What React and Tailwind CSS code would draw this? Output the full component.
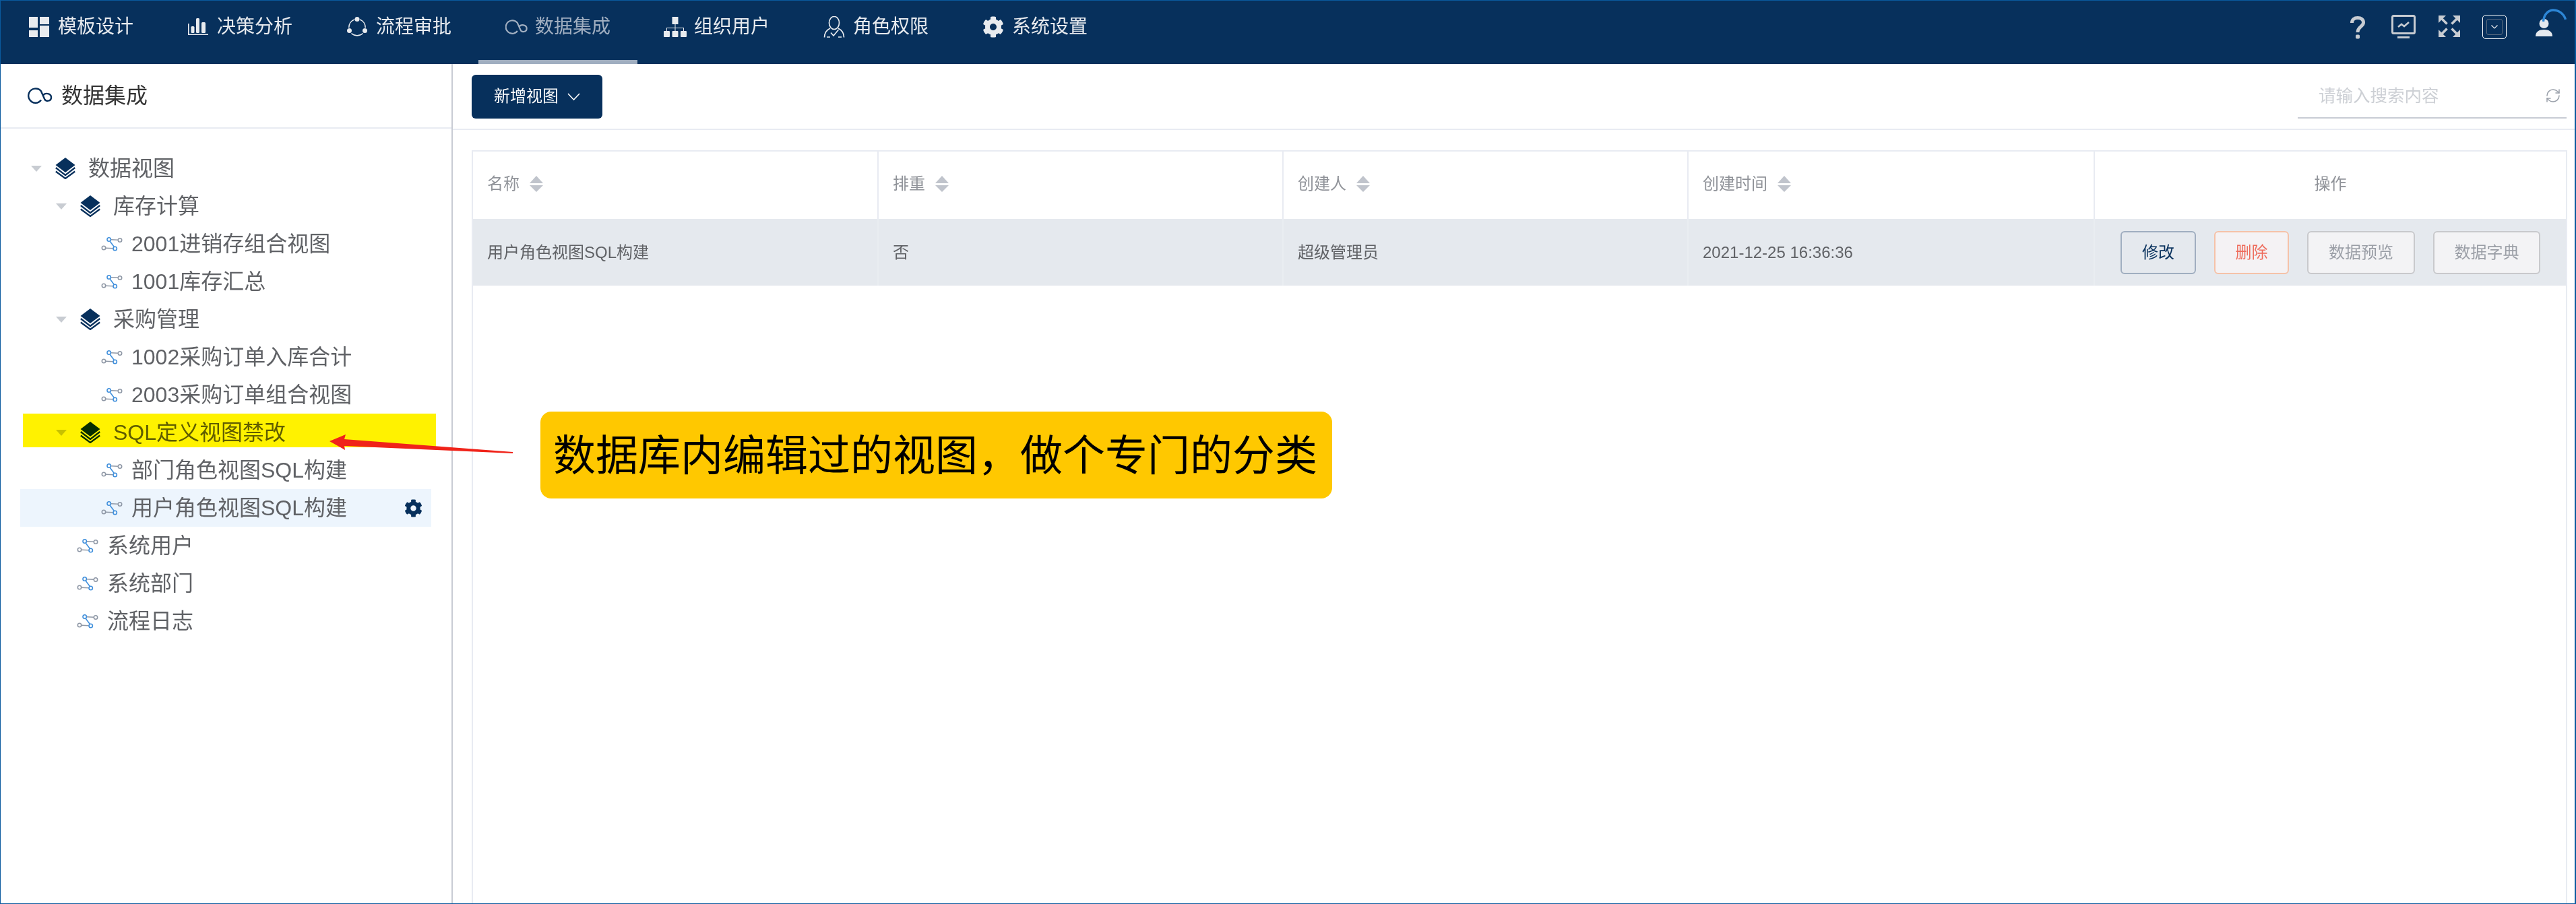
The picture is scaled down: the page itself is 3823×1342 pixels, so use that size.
import React from "react";
import { FaCog } from "react-icons/fa";
import { RefreshCw } from "lucide-react";

const NAVY = "#07305c";

function TemplateIcon() {
  return (
    <svg viewBox="0 0 30 30" className="h-[30px] w-[30px] shrink-0" fill="#e8ebef">
      <rect x="0" y="0" width="13" height="16" />
      <rect x="0" y="20" width="13" height="10" />
      <rect x="16" y="0" width="14" height="11" />
      <rect x="16" y="13" width="14" height="17" />
    </svg>
  );
}
function ChartIcon() {
  return (
    <svg viewBox="0 0 30 26" className="h-[26px] w-[30px] shrink-0" fill="#e8ebef">
      <path d="M0 8h1.6v15.6H30V25H0z" />
      <rect x="4.5" y="12" width="5" height="10" rx="1.5" />
      <rect x="12" y="0" width="5" height="22" rx="1.5" />
      <rect x="20" y="6" width="6" height="16" rx="1.5" />
    </svg>
  );
}
function FlowIcon() {
  return (
    <svg viewBox="0 0 30 30" className="h-[30px] w-[30px] shrink-0" fill="#e8ebef" stroke="none">
      <path d="M11 4A12.5 12.5 0 0 0 2.8 16M19 4A12.5 12.5 0 0 1 27.2 16M6.5 24.5A12.5 12.5 0 0 0 23.5 24.5" fill="none" stroke="#e8ebef" strokeWidth="1.6" />
      <circle cx="15" cy="3.5" r="3.5" />
      <circle cx="3.5" cy="20.5" r="3.5" />
      <circle cx="26.5" cy="20.5" r="3.5" />
    </svg>
  );
}
function CloudIcon({ className, color }) {
  return (
    <svg viewBox="0 0 36 24" className={className} fill="none" stroke={color} strokeWidth="2.4">
      <path d="M19.5 18.5C17.4 21.4 14.6 22.7 11.6 22.7A10.6 10.6 0 1 1 19.4 5.2L24.5 16.8C26 21 34.5 21 34.5 14.5C34.5 8 25 7.5 22.6 11.5" />
    </svg>
  );
}
function OrgIcon() {
  return (
    <svg viewBox="0 0 34 30" className="h-[30px] w-[34px] shrink-0" fill="#e8ebef">
      <rect x="12.5" y="0" width="9" height="11" />
      <path d="M16.5 11h1v5H30v5h-1v-4H17.5v4h-1v-4H5v4H4v-5h12.5z" />
      <rect x="0" y="21" width="9" height="9" rx="1" />
      <rect x="12.5" y="21" width="9" height="9" rx="1" />
      <rect x="25" y="21" width="9" height="9" rx="1" />
    </svg>
  );
}
function RoleIcon() {
  return (
    <svg viewBox="0 0 32 32" className="h-[32px] w-[32px] shrink-0" fill="none" stroke="#e8ebef" strokeWidth="1.7">
      <ellipse cx="16" cy="10" rx="7.5" ry="9.5" />
      <path d="M10 18C6 20 1.5 23 1.5 31.5M22 18C26 20 30.5 23 30.5 31.5" />
      <path d="M11 24.5l4 4.5 7.5-9" />
      <path d="M5 31h5M22 31h5" />
    </svg>
  );
}
function QuestionIcon() {
  return (
    <svg viewBox="0 0 22 34" className="h-[34px] w-[22px]" fill="none" stroke="#c8ccd2" strokeWidth="5">
      <path d="M2.5 10C2.5 5 6 2.5 11 2.5C16 2.5 19.5 5 19.5 9.5C19.5 15.5 11 15.5 11 24" />
      <rect x="8.5" y="28" width="5" height="5" rx="1" fill="#c8ccd2" strokeWidth="1" />
    </svg>
  );
}
function MonitorIcon() {
  return (
    <svg viewBox="0 0 36 35" className="h-[35px] w-[36px]" fill="none" stroke="#c8ccd2">
      <rect x="1.5" y="1.5" width="33" height="26" rx="2" strokeWidth="3" />
      <path d="M10 18l5-4 4 3 7-6" strokeWidth="2.6" />
      <path d="M9 33.5h18" strokeWidth="3" />
    </svg>
  );
}
function ExpandIcon() {
  return (
    <svg viewBox="0 0 32 32" className="h-[32px] w-[32px]" fill="#c8ccd2" stroke="#c8ccd2">
      <path d="M0 0h11L0 11z" strokeWidth="0" />
      <path d="M32 0H21L32 11z" strokeWidth="0" />
      <path d="M0 32h11L0 21z" strokeWidth="0" />
      <path d="M32 32H21L32 21z" strokeWidth="0" />
      <path d="M4 4L12.5 12.5M28 4L19.5 12.5M4 28L12.5 19.5M28 28L19.5 19.5" strokeWidth="3.6" fill="none" />
    </svg>
  );
}
function UserIcon() {
  return (
    <svg viewBox="0 0 46 42" className="h-[42px] w-[46px]">
      <circle cx="12.5" cy="22" r="7" fill="#e5e9ee" />
      <path d="M0 41C0 34 5 31 12.5 31S25 34 25 41z" fill="#e5e9ee" />
      <path d="M11.5 19C12.5 7 20 2 26 2C34 2 42 7 44.5 16" fill="none" stroke="#2d86d6" strokeWidth="3.4" />
    </svg>
  );
}
function LayersIcon() {
  return (
    <svg viewBox="0 0 30 32" className="h-[32px] w-[30px] shrink-0">
      <polygon points="15,0 29.5,11 15,22 0.5,11" fill={NAVY} />
      <polyline points="0.8,15 15,26 29.2,15" fill="none" stroke={NAVY} strokeWidth="2.3" />
      <polyline points="0.8,20.5 15,31 29.2,20.5" fill="none" stroke={NAVY} strokeWidth="2.3" />
    </svg>
  );
}
function LeafIcon() {
  return (
    <svg viewBox="0 0 32 21" className="h-[21px] w-[32px] shrink-0" fill="none" strokeWidth="1.6">
      <path d="M15 3.7L25 4.3M7 16.2L17.7 16.8" stroke="#8f98a6" />
      <path d="M13.2 6.2L19.2 14.3" stroke="#3f8fdc" />
      <circle cx="11.7" cy="3.5" r="2.7" stroke="#3f8fdc" />
      <circle cx="28" cy="4.5" r="2.7" stroke="#8f98a6" />
      <circle cx="4" cy="16" r="2.7" stroke="#8f98a6" />
      <circle cx="20.7" cy="17" r="2.7" stroke="#3f8fdc" />
    </svg>
  );
}
function Caret() {
  return (
    <svg viewBox="0 0 16 9" className="h-[9px] w-[16px] shrink-0">
      <polygon points="0,0 16,0 8,9" fill="#c8ccd2" />
    </svg>
  );
}
function SortIcon() {
  return (
    <svg viewBox="0 0 20 24" className="ml-[15px] h-[24px] w-[20px] shrink-0" fill="#c0c4cc">
      <polygon points="10,0 20,11 0,11" />
      <polygon points="0,14 20,14 10,24" />
    </svg>
  );
}

const navItems = [
  ["模板设计", <TemplateIcon />],
  ["决策分析", <ChartIcon />],
  ["流程审批", <FlowIcon />],
  ["数据集成", <CloudIcon className="h-[22px] w-[33px] shrink-0" color="#a0aec0" />, true],
  ["组织用户", <OrgIcon />],
  ["角色权限", <RoleIcon />],
  ["系统设置", <FaCog className="h-[32px] w-[32px] shrink-0 text-[#e8ebef]" />],
];

const tree = [
  { label: "数据视图", kind: "group", pad: "pl-[16px]" },
  { label: "库存计算", kind: "group", pad: "pl-[53px]" },
  { label: "2001进销存组合视图", pad: "pl-[120px]" },
  { label: "1001库存汇总", pad: "pl-[120px]" },
  { label: "采购管理", kind: "group", pad: "pl-[53px]" },
  { label: "1002采购订单入库合计", pad: "pl-[120px]" },
  { label: "2003采购订单组合视图", pad: "pl-[120px]" },
  { label: "SQL定义视图禁改", kind: "group", pad: "pl-[53px]" },
  { label: "部门角色视图SQL构建", pad: "pl-[120px]" },
  { label: "用户角色视图SQL构建", pad: "pl-[120px]", active: true },
  { label: "系统用户", pad: "pl-[84px]" },
  { label: "系统部门", pad: "pl-[84px]" },
  { label: "流程日志", pad: "pl-[84px]" },
];

function TreeRow({ item }) {
  return (
    <div className={`flex h-[56px] items-center ${item.pad} ${item.active ? "bg-[#edf5fd]" : ""}`}>
      {item.kind === "group" ? (
        <>
          <Caret />
          <span className="ml-[20px]"><LayersIcon /></span>
          <span className="ml-[19px]">{item.label}</span>
        </>
      ) : (
        <>
          <LeafIcon />
          <span className="ml-[13px]">{item.label}</span>
        </>
      )}
      {item.active && <FaCog className="ml-auto mr-[13px] h-[27px] w-[27px] text-[#07305c]" />}
    </div>
  );
}

const headers = ["名称", "排重", "创建人", "创建时间"];
const cells = ["用户角色视图SQL构建", "否", "超级管理员", "2021-12-25 16:36:36"];

export default function App() {
  return (
    <div className="relative flex h-[1342px] w-[3823px] flex-col overflow-hidden border-t border-b border-l border-r-2 border-[#0a5a9e] bg-white [font-family:'Liberation_Sans','Noto_Sans_CJK_SC',sans-serif]">
      <header className="flex h-[94px] shrink-0 bg-[#07305c] pl-px">
        {navItems.map(([label, icon, active]) => (
          <div
            key={label}
            className={`flex h-[94px] w-[236px] items-center gap-[12px] border-b-[6px] px-10 pb-[10px] text-[28px] ${
              active ? "border-[#a0aec0] text-[#a0aec0]" : "border-transparent text-[#e8ebef]"
            }`}
          >
            <span className="flex w-[32px] shrink-0 justify-center">{icon}</span>
            <span className="whitespace-nowrap">{label}</span>
          </div>
        ))}
        <div className="ml-auto flex items-start pr-[12px] pt-[12px]">
          <span className="mt-[11px]"><QuestionIcon /></span>
          <span className="ml-[39px] mt-[9px]"><MonitorIcon /></span>
          <span className="ml-[34px] mt-[10px]"><ExpandIcon /></span>
          <div className="ml-[33px] mt-[9px] flex h-[36px] w-[36px] items-center justify-center rounded-[5px] border border-white">
            <div className="flex h-[24px] w-[24px] items-center justify-center rounded-[3px] border border-[#5b6b80]">
              <svg viewBox="0 0 10 6" className="h-[6px] w-[10px]" fill="none" stroke="#e8ebef" strokeWidth="1.2">
                <path d="M0.5 0.5L5 5L9.5 0.5" />
              </svg>
            </div>
          </div>
          <span className="ml-[43px]"><UserIcon /></span>
        </div>
      </header>

      <div className="flex min-h-0 flex-1">
        <aside className="w-[671px] shrink-0 border-r-2 border-[#c8ccd4]">
          <div className="flex h-[96px] items-center gap-[13px] border-b-2 border-[#e8ebf2] pl-[40px] text-[32px] text-[#333333]">
            <CloudIcon className="h-[24px] w-[37px]" color="#07305c" />
            <span>数据集成</span>
          </div>
          <div className="pl-[29px] pr-[30px] pt-[31px] text-[32px] text-[#606266]">
            {tree.map((item) => (
              <TreeRow key={item.label} item={item} />
            ))}
          </div>
        </aside>

        <main className="flex min-w-0 flex-1 flex-col">
          <div className="flex h-[98px] shrink-0 items-center justify-between border-b-2 border-[#e8ebf2] pl-[28px] pr-[12px]">
            <button className="flex h-[65px] w-[194px] items-center justify-center gap-[13px] rounded-[6px] bg-[#07305c] text-[24px] text-white">
              新增视图
              <svg viewBox="0 0 19 11" className="h-[11px] w-[19px]" fill="none" stroke="#ffffff" strokeWidth="1.6">
                <path d="M1 1L9.5 10L18 1" />
              </svg>
            </button>
            <div className="flex h-[66px] w-[399px] items-center border-b-2 border-[#c8ccd4] pl-[31px] pr-[8px]">
              <input
                placeholder="请输入搜索内容"
                className="min-w-0 flex-1 bg-transparent text-[25.5px] outline-none placeholder:text-[#cdd0d5]"
              />
              <RefreshCw className="h-[24px] w-[24px] text-[#9aa0aa]" strokeWidth={1.5} />
            </div>
          </div>

          <div className="ml-[28px] mr-[11px] mt-[30px] flex-1 border-2 border-b-0 border-[#e8ebf2]">
            <div className="grid h-[100px] grid-cols-[602px_601px_601px_603px_1fr] text-[24px] text-[#909399]">
              {headers.map((h) => (
                <div key={h} className="flex items-center border-r-2 border-[#e8ebf2] pb-[4px] pl-[21px]">
                  {h}
                  <SortIcon />
                </div>
              ))}
              <div className="flex items-center justify-center pb-[4px]">操作</div>
            </div>
            <div className="grid h-[99px] grid-cols-[602px_601px_601px_603px_1fr] bg-[#e5e9ee] text-[24px] text-[#606266]">
              {cells.map((c) => (
                <div key={c} className="flex items-center border-r-2 border-[#e9edf1] pl-[21px]">
                  {c}
                </div>
              ))}
              <div className="flex items-center justify-center gap-[27px]">
                <button className="h-[64px] w-[112px] rounded-[6px] border-2 border-[#a0aec0] text-[24px] text-[#07305c]">修改</button>
                <button className="h-[64px] w-[111px] rounded-[6px] border-2 border-[#f5c2a8] bg-[#f4f2f4] text-[24px] text-[#ee6c5c]">删除</button>
                <button className="h-[64px] w-[160px] rounded-[6px] border-2 border-[#c8c9cc] bg-[#f3f3f5] text-[24px] text-[#9a9ea6]">数据预览</button>
                <button className="h-[64px] w-[159px] rounded-[6px] border-2 border-[#c8c9cc] bg-[#f3f3f5] text-[24px] text-[#9a9ea6]">数据字典</button>
              </div>
            </div>
          </div>
        </main>
      </div>

      {/* annotations drawn over the screenshot */}
      <div className="absolute left-[33px] top-[613px] h-[50px] w-[613px] bg-[#fff200] mix-blend-multiply" />
      <svg viewBox="0 0 274 30" className="absolute left-[487px] top-[644px] h-[30px] w-[274px]">
        <polygon points="1,10 25,0 23,7 273,26 273,28 23,17 24,23" fill="#f0231a" />
      </svg>
      <div className="absolute left-[801px] top-[610px] flex h-[129px] w-[1175px] items-center justify-center rounded-[16px] bg-[#ffc800] pr-[3px] pt-[2px] text-[63px] text-black">
        数据库内编辑过的视图，做个专门的分类
      </div>
    </div>
  );
}
